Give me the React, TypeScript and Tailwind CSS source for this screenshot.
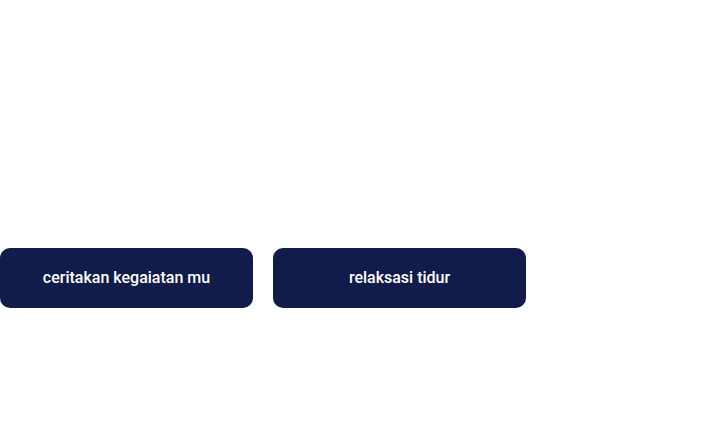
export default function App() {
  const actions = ['ceritakan kegaiatan mu', 'relaksasi tidur'];

  return (
    <div className="w-[723px] h-[424px] bg-white pt-[248px] font-['Roboto',sans-serif]">
      <div className="flex gap-5">
        {actions.map(label => (
          <button
            key={label}
            className="w-[253px] h-[60px] rounded-[10px] bg-[#121c4a] text-white text-base font-medium"
          >
            {label}
          </button>
        ))}
      </div>
    </div>
  );
}
